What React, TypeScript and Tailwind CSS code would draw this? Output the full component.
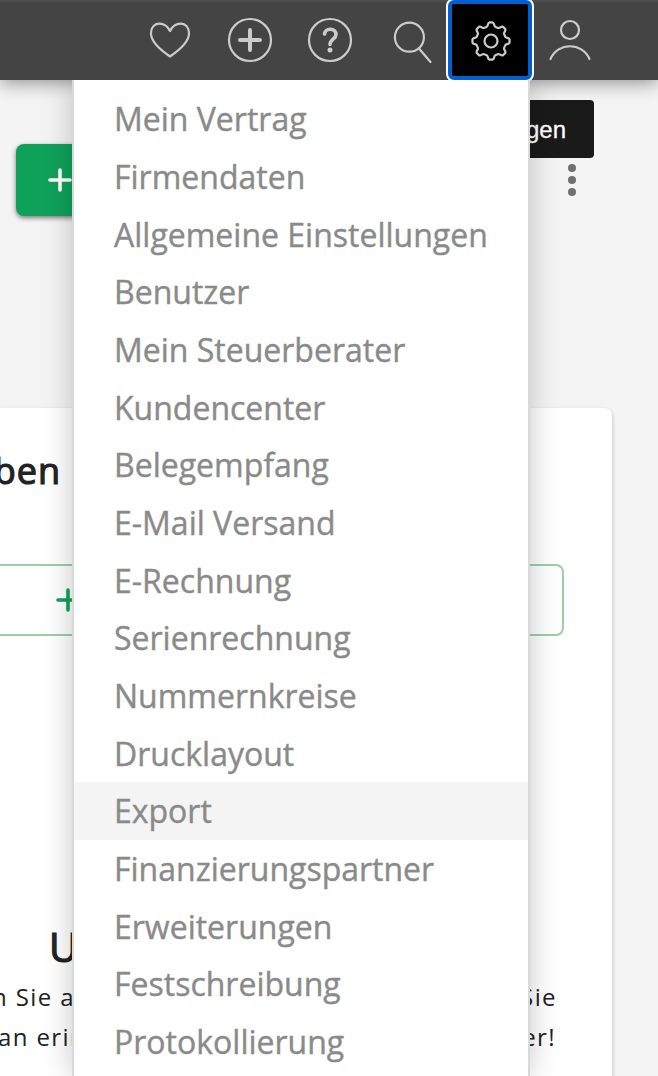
import React from "react";

const items = [
  "Mein Vertrag", "Firmendaten", "Allgemeine Einstellungen", "Benutzer", "Mein Steuerberater",
  "Kundencenter", "Belegempfang", "E-Mail Versand", "E-Rechnung", "Serienrechnung",
  "Nummernkreise", "Drucklayout", "Export", "Finanzierungspartner", "Erweiterungen",
  "Festschreibung", "Protokollierung",
];

function Icon({ children, className = "" }: { children: React.ReactNode; className?: string }) {
  return (
    <svg viewBox="0 0 48 48" fill="none" stroke="currentColor" strokeWidth="2.200" strokeLinecap="round" strokeLinejoin="round" className={"h-12 w-12 shrink-0 " + className}>
      {children}
    </svg>
  );
}

function gearPath() {
  const parts: string[] = [];
  const pt = (r: number, deg: number) => {
    const a = (deg * Math.PI) / 180;
    return (24 + r * Math.sin(a)).toFixed(2) + " " + (24 - r * Math.cos(a)).toFixed(2);
  };
  for (let i = 0; i < 8; i++) {
    const b = i * 45;
    parts.push((i === 0 ? "M" : "L") + pt(18.6, b - 5));
    parts.push("L" + pt(18.6, b + 5));
    parts.push("C" + pt(18.2, b + 12) + " " + pt(14.8, b + 10) + " " + pt(14.8, b + 18));
    parts.push("Q" + pt(14.8, b + 22.5) + " " + pt(14.8, b + 27));
    parts.push("C" + pt(14.8, b + 35) + " " + pt(18.2, b + 33) + " " + pt(18.6, b + 40));
  }
  return parts.join("") + "Z";
}

function Header() {
  return (
    <header className="relative z-10 flex h-20 items-center border-t-2 border-[#4e4e4e] bg-[#444] pl-[146px] text-[#ccc] shadow-[0_2px_18px_rgba(0,0,0,0.45)]">
      <Icon className="mr-8">
        <path d="M24 14C20 4 5 3.500 5 16.500C5 25.500 16 34 24 39.500C32 34 43 25.500 43 16.500C43 3.500 28 4 24 14Z" />
      </Icon>
      <Icon className="mr-8">
        <circle cx="24" cy="23" r="21" />
        <path d="M24 13v20M14 23h20" strokeWidth="4" />
      </Icon>
      <Icon className="mr-8">
        <circle cx="24" cy="23" r="21" />
        <path d="M18.500 17C19 10.500 30 10.500 30 17.500C30 22 24 22.500 24 27.500" strokeWidth="3.600" />
        <circle cx="24" cy="33" r="2.500" fill="currentColor" stroke="none" />
      </Icon>
      <Icon className="mr-[14px]">
        <circle cx="23.400" cy="20.200" r="14.500" />
        <path d="M33 31.500L44.500 45" />
      </Icon>
      <div className="-mt-[2px] flex h-20 w-[84px] shrink-0 items-center justify-center rounded-[6px] border-4 border-[#0060d0] bg-black shadow-[0_0_0_2px_#fff]">
        <Icon className="-mr-[1px] mt-[2px]">
          <path d={gearPath()} />
          <circle cx="24" cy="24" r="6.500" />
        </Icon>
      </div>
      <Icon className="ml-[14px]">
        <circle cx="24" cy="13" r="9" />
        <path d="M4.500 42C12 25 36 25 43.500 42" />
      </Icon>
    </header>
  );
}

export default function App() {
  return (
    <div className="relative h-[1076px] w-[658px] overflow-hidden bg-[#f4f4f4] font-['Open_Sans',sans-serif] text-[#222]">
      <Header />
      <main>
        <div className="flex h-[328px] items-start justify-between pl-4 pr-[76px] pt-16">
          <button className="flex h-[72px] w-[200px] items-center rounded-[8px] bg-[#0fa15a] pl-8 text-white shadow-[0_2px_5px_rgba(0,0,0,0.5)]">
            <svg viewBox="0 0 24 24" className="h-6 w-6" fill="none" stroke="currentColor" strokeWidth="3.600" strokeLinecap="round"><path d="M12 2v20M2 12h20" /></svg>
          </button>
          <svg viewBox="0 0 20 36" className="mt-[18px] h-9 w-5" fill="#707070">
            <circle cx="10" cy="6" r="4" /><circle cx="10" cy="18" r="4" /><circle cx="10" cy="30" r="4" />
          </svg>
        </div>
        <section className="h-[700px] w-[612px] rounded-tr-[8px] bg-white pt-[40px] shadow-[0_2px_4px_rgba(0,0,0,0.25)]">
          <h2 className="-ml-[140px] w-[201px] text-right text-[36px] font-normal leading-[46px] tracking-[1px] [-webkit-text-stroke:1.2px_#222]">Aufgaben</h2>
          <div className="-ml-2 mt-[70px] flex h-[72px] w-[572px] items-center rounded-[8px] border-2 border-[#99cfab] pl-[62px] text-[#0fa15a]">
            <svg viewBox="0 0 24 24" className="h-6 w-6" fill="none" stroke="currentColor" strokeWidth="3.600" strokeLinecap="round"><path d="M12 2v20M2 12h20" /></svg>
          </div>
          <h3 className="ml-[49px] mt-[283px] text-[40px] font-normal leading-[56px] [-webkit-text-stroke:1.2px_#222]">U</h3>
          <div className="mt-[2px] flex w-[557px] justify-between text-[24px] leading-[40px] tracking-[1.400px]">
            <p className="-ml-[8px]">n Sie a<br /><span className="ml-[6px]">an erin</span></p>
            <p className="text-right">Sie<br /><span className="mr-[1px]">er!</span></p>
          </div>
        </section>
      </main>
      <div className="absolute left-[350px] top-[100px] flex h-[58px] w-[244px] items-center justify-end rounded-[4px] bg-[#1a1a1a] pr-7 pt-[2px] font-['Liberation_Sans',sans-serif] text-[24px] text-white [-webkit-text-stroke:0.3px_white]">
        Einstellungen
      </div>
      <div className="absolute left-[72px] top-20 z-20 h-[996px] w-[458px] border-x-2 border-[#d9d9d9] bg-white pt-[10px] shadow-[0_0_28px_rgba(0,0,0,0.22)] [clip-path:inset(0_-50px_0_-50px)]">
        <ul>
          {items.map((item) => (
            <li key={item} className={"flex h-[57.700px] items-center whitespace-nowrap pl-10 pt-[0.600px] text-[32px] text-[#8a8a8a] [-webkit-text-stroke:0.4px_#8a8a8a] " + (item === "Export" ? "bg-[#f4f4f4]" : "")}>
              {item}
            </li>
          ))}
        </ul>
      </div>
    </div>
  );
}
